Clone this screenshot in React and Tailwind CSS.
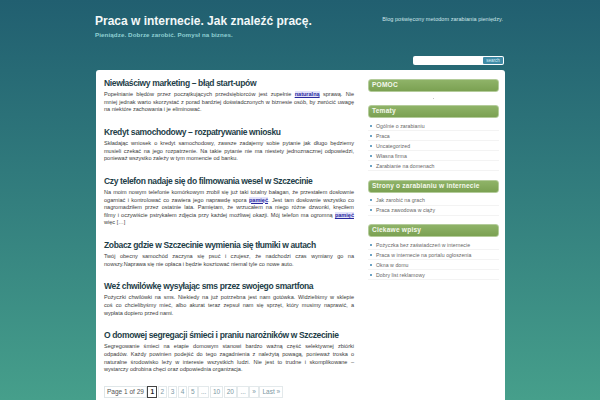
const posts = [
  { t: "Niewłaściwy marketing – błąd start-upów", l: [["Popełnianie błędów przez początkujących przedsiębiorców jest zupełnie ", { k: "naturalną" }, " sprawą. Nie"], ["mniej jednak warto skorzystać z porad bardziej doświadczonych w biznesie osób, by zwrócić uwagę"], ["na niektóre zachowania i je eliminować."]] },
  { t: "Kredyt samochodowy – rozpatrywanie wniosku", l: [["Składając wniosek o kredyt samochodowy, zawsze zadajemy sobie pytanie jak długo będziemy"], ["musieli czekać na jego rozpatrzenie. Na takie pytanie nie ma niestety jednoznacznej odpowiedzi,"], ["ponieważ wszystko zależy w tym momencie od banku."]] },
  { t: "Czy telefon nadaje się do filmowania wesel w Szczecinie", l: [["Na moim nowym telefonie komórkowym zrobił się już taki totalny bałagan, że przestałem dosłownie"], ["ogarniać i kontrolować co zawiera jego naprawdę spora ", { k: "pamięć" }, ". Jest tam dosłownie wszystko co"], ["nagromadziłem przez ostatnie lata. Pamiętam, że wrzucałem na niego różne dzwonki, kręciłem"], ["filmy i oczywiście pstrykałem zdjęcia przy każdej możliwej okazji. Mój telefon ma ogromną ", { k: "pamięć" }], ["więc […]"]] },
  { t: "Zobacz gdzie w Szczecinie wymienia się tłumiki w autach", l: [["Twój obecny samochód zaczyna się psuć i czujesz, że nadchodzi czas wymiany go na"], ["nowszy.Naprawa się nie opłaca i będzie kosztować niemal tyle co nowe auto."]] },
  { t: "Weź chwilówkę wysyłając sms przez swojego smartfona", l: [["Pożyczki chwilówki na sms. Niekiedy na już potrzebna jest nam gotówka. Widzieliśmy w sklepie"], ["coś co chcielibyśmy mieć, albo akurat teraz zepsuł nam się sprzęt, który musimy naprawić, a"], ["wypłata dopiero przed nami."]] },
  { t: "O domowej segregacji śmieci i praniu narożników w Szczecinie", l: [["Segregowanie śmieci na etapie domowym stanowi bardzo ważną część selektywnej zbiórki"], ["odpadów. Każdy powinien podejść do tego zagadnienia z należytą powagą, ponieważ troska o"], ["naturalne środowisko leży w interesie wszystkich ludzi. Nie jest to trudne i skomplikowane –"], ["wystarczy odrobina chęci oraz odpowiednia organizacja."]] },
];
const sidebar = [
  { h: "Tematy", items: ["Ogólnie o zarabianiu", "Praca", "Uncategorized", "Własna firma", "Zarabianie na domenach"] },
  { h: "Strony o zarabianiu w internecie", items: ["Jak zarobić na grach", "Praca zawodowa w ciąży"] },
  { h: "Ciekawe wpisy", items: ["Pożyczka bez zaświadczeń w internecie", "Praca w internecie na portalu ogłoszenia", "Okna w domu", "Dobry list reklamowy"] },
];
const pages = ["2", "3", "4", "5", "...", "10", "20", "...", "»", "Last »"];

function Heading({ children }) {
  return (
    <div className="h-[13px] rounded-[3px] bg-gradient-to-b from-[#8fb368] to-[#7ba152] border border-[#b4cc9b] pl-[3px] flex items-center text-[6.6px] font-bold tracking-[0.2px] text-[#f4f8ec] leading-none whitespace-nowrap">
      {children}
    </div>
  );
}

export default function App() {
  return (
    <div className="h-[400px] w-[600px] overflow-hidden bg-gradient-to-b from-[#215f70] to-[#469f8b] font-['Liberation_Sans',Arial,sans-serif]">
      <div className="ml-[95px] w-[410px]">
        <div className="flex justify-between h-[56px] pt-[14px]">
          <div>
            <div className="text-[12px] font-bold leading-[15px] text-[#f3f8f8] whitespace-nowrap">Praca w internecie. Jak znaleźć pracę.</div>
            <div className="mt-[2px] text-[6.2px] font-bold leading-[8px] tracking-[0.1px] text-[#8fd0d3] whitespace-nowrap">Pieniądze. Dobrze zarobić. Pomysł na biznes.</div>
          </div>
          <div className="mr-[2px] mt-[2px] text-[5.5px] leading-[7px] tracking-[0.05px] text-[#cfe6ea] whitespace-nowrap">Blog poświęcony metodom zarabiania pieniędzy.</div>
        </div>
        <div className="flex justify-end h-[14px] pr-[1px]">
          <div className="w-[91px] h-[9px] bg-white rounded-[2px] flex justify-end items-center pr-px">
            <div className="w-[20px] h-[7px] bg-[#3f8ba6] rounded-[1px] text-[4.5px] leading-[7px] text-center text-[#d5edf3]">search</div>
          </div>
        </div>
        <div className="w-[409px] h-[340px] ml-px bg-white rounded-t-[3px] flex pl-[8px] pt-[7px]">
          <div className="w-[261px]">
            {posts.map((p) => (
              <div key={p.t} className="mb-[12.2px]">
                <div className="text-[8.5px] font-bold leading-[12px] tracking-[-0.35px] text-[#1e3e48] whitespace-nowrap">{p.t}</div>
                <div className="mt-[2px] w-[250px] text-[5.55px] leading-[7.6px] text-[#3a3a3a]">
                  {p.l.map((line, i) => (
                    <div key={i} className={i < p.l.length - 1 ? "[text-align-last:justify]" : ""}>
                      {line.map((s, j) =>
                        typeof s === "string" ? s : (
                          <span key={j} className="font-bold underline text-[#2a2a9e] bg-[#e3e3fb]">{s.k}</span>
                        )
                      )}
                    </div>
                  ))}
                </div>
              </div>
            ))}
            <div className="mt-[2px] flex gap-[0.5px] text-[6.5px] leading-[10px] text-[#7c97a3]">
              <div className="px-[2px] border border-[#dfe6e8] text-[#555] h-[12px] whitespace-nowrap">Page 1 of 29</div>
              <div className="px-[2px] border border-[#444] text-[#222] font-bold h-[12px]">1</div>
              {pages.map((p, i) => (
                <div key={i} className="px-[2px] border border-[#e3e9eb] h-[12px] whitespace-nowrap">{p}</div>
              ))}
            </div>
          </div>
          <div className="ml-[3px] mt-[2px] w-[131px]">
            <Heading>POMOC</Heading>
            <div className="h-[13px] flex justify-center items-center"><div className="w-[1.5px] h-[1.5px] bg-[#c5c5c5]" /></div>
            {sidebar.map((s) => (
              <div key={s.h} className="mb-[8.5px]">
                <Heading>{s.h}</Heading>
                <div className="mt-[3px]">
                  {s.items.map((it) => (
                    <div key={it} className="h-[10px] flex items-center border-b border-[#f3f3f3] text-[5.2px] leading-[8px] tracking-[0.05px] text-[#666] whitespace-nowrap">
                      <div className="w-[2px] h-[2px] ml-[2px] mr-[4px] bg-[#6da3c4]" />
                      {it}
                    </div>
                  ))}
                </div>
              </div>
            ))}
          </div>
        </div>
      </div>
    </div>
  );
}
